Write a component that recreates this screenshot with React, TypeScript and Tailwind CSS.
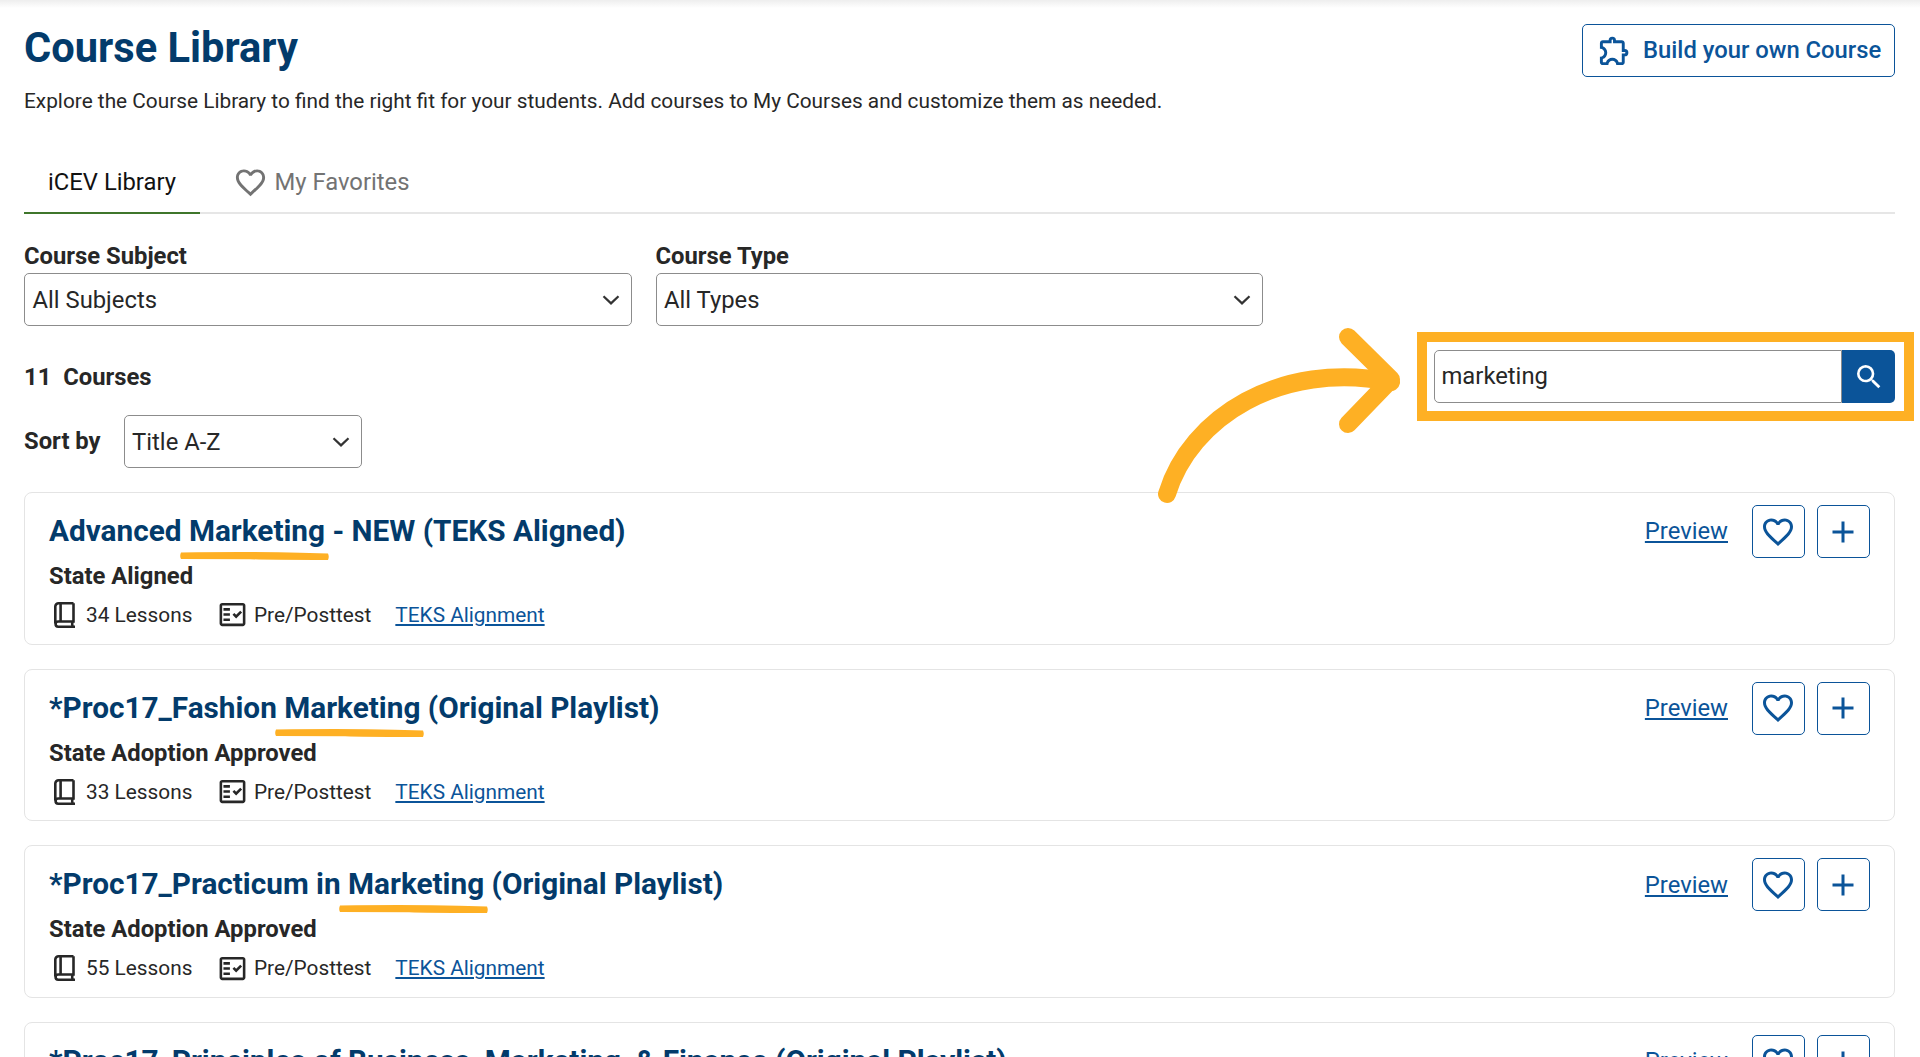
import { MdAdd, MdFavoriteBorder, MdOutlineExtension, MdOutlineFactCheck, MdSearch } from "react-icons/md";

interface Course {
  before: string;
  match: string;
  after: string;
  status: string;
  lessons: number;
  marked?: boolean;
}

const courses: Course[] = [
  { before: "Advanced ", match: "Marketing", after: " - NEW (TEKS Aligned)", status: "State Aligned", lessons: 34, marked: true },
  { before: "*Proc17_Fashion ", match: "Marketing", after: " (Original Playlist)", status: "State Adoption Approved", lessons: 33, marked: true },
  { before: "*Proc17_Practicum in ", match: "Marketing", after: " (Original Playlist)", status: "State Adoption Approved", lessons: 55, marked: true },
  { before: "*Proc17_Principles of Business, ", match: "Marketing", after: ", & Finance (Original Playlist)", status: "State Adoption Approved", lessons: 47 },
];

function Chevron() {
  return (
    <svg className="h-[10px] w-[18px]" viewBox="0 0 18 10" fill="none" stroke="#333" strokeWidth="2.2">
      <path d="M1.5 1.2 9 8.4l7.500-7.200" />
    </svg>
  );
}

function SelectBox({ value, className }: { value: string; className: string }) {
  return (
    <button
      className={`flex h-[53px] items-center justify-between rounded-[5px] border-[1.500px] border-[#8c8c8c] pr-[11px] pl-[7.500px] text-[23.800px] text-[#272727] ${className}`}
    >
      <span className="pt-[2px]">{value}</span>
      <Chevron />
    </button>
  );
}

function BookIcon() {
  return (
    <svg className="h-[26px] w-[21px]" viewBox="0 0 21 26" fill="none" stroke="#272727" strokeWidth="2.600">
      <path d="M19.500 1.300H4.600A3.300 3.300 0 0 0 1.300 4.600v17M19.500 1.300v18.200H4.200a2.600 2.600 0 0 0 0 5.200H21M6.600 1.300v18.200M18.700 19.500q-1.200 2.600 0 5.200" />
    </svg>
  );
}

function Marker() {
  return (
    <svg className="absolute top-[41px] -left-[9px] h-2 w-[149px]" viewBox="0 0 149 8" fill="#feb024">
      <path d="M1 0.500Q75-.5 120 .8L148 1.500Q149.500 5 148 7.900Q90 8 70 7.200L1 7Q-.6 4 1 .5Z" />
    </svg>
  );
}

function CourseCard({ course }: { course: Course }) {
  return (
    <article className="flex h-[152.600px] shrink-0 items-start justify-between rounded-lg border-[1.500px] border-[#e4e4e4] pt-[12px] pr-[24.500px] pl-6">
      <div>
        <h2 className="mt-[6.300px] h-[40px] text-[29.750px] leading-[40px] font-bold whitespace-pre text-[#033b6b]">
          {course.before}
          <span className="relative inline-block">
            {course.match}
            {course.marked && <Marker />}
          </span>
          {course.after}
        </h2>
        <p className="mt-[9.700px] text-[23.800px] leading-[30px] font-bold">{course.status}</p>
        <div className="mt-[9px] flex h-[30px] items-center text-[20.820px] leading-[30px]">
          <span className="mr-[11px] ml-[5px]">
            <BookIcon />
          </span>
          <span>{course.lessons} Lessons</span>
          <MdOutlineFactCheck className="mr-[6px] ml-[24.500px] size-[31px]" />
          <span>Pre/Posttest</span>
          <a className="ml-6 text-[#0b5499] underline">TEKS Alignment</a>
        </div>
      </div>

      <div className="mt-[0.300px] flex items-center text-[#0b5499]">
        <a className="mr-[23.500px] pt-px text-[23.800px] underline">Preview</a>
        <button className="mr-3 flex size-[53px] items-center justify-center rounded-[5px] border-[1.500px] border-[#0b5499]">
          <MdFavoriteBorder className="size-[36px]" />
        </button>
        <button className="flex size-[53px] items-center justify-center rounded-[5px] border-[1.500px] border-[#0b5499]">
          <MdAdd className="size-[36px]" />
        </button>
      </div>
    </article>
  );
}

function SearchBar() {
  return (
    <div className="relative mt-[24px] flex h-[53px] w-[461px]">
      <div className="flex flex-1 items-center rounded-l-[5px] border-[1.500px] border-[#8c8c8c] pt-px pl-[6.500px] text-[23.800px]">
        marketing
      </div>
      <button className="flex w-[53px] items-center justify-center rounded-r-[5px] bg-[#0b5499] text-white">
        <MdSearch className="size-[32px]" />
      </button>
      <div className="pointer-events-none absolute -top-[18px] -left-[17px] h-[89px] w-[497px] border-10 border-[#feb024]" />
      <svg
        className="pointer-events-none absolute -top-[30px] -left-[284px] h-[190px] w-[260px]"
        viewBox="1150 320 260 190"
        fill="none"
        stroke="#feb024"
        strokeWidth="18"
        strokeLinecap="round"
        strokeLinejoin="round"
      >
        <path d="M1167 494C1190 418 1280 360 1391 382" />
        <path d="M1348 337 1391 379.500 1348 424" />
      </svg>
    </div>
  );
}

export default function App() {
  return (
    <div className="flex h-[1057px] flex-col overflow-hidden bg-white pr-[25px] pl-6 font-[Roboto,sans-serif] text-[#272727]">
      <div className="-mr-[25px] -ml-6 h-2 shrink-0 bg-gradient-to-b from-[#eeeeee] to-white" />

      <header className="flex h-[135px] shrink-0 items-start justify-between">
        <div>
          <h1 className="mt-[14.300px] text-[41.640px] leading-[52px] font-bold text-[#033b6b]">Course Library</h1>
          <p className="mt-[11.700px] text-[20.820px] leading-[30px]">
            Explore the Course Library to find the right fit for your students. Add courses to My Courses and customize them as needed.
          </p>
        </div>
        <button className="mt-4 flex h-[53px] w-[313px] items-center rounded-[5px] border-[1.500px] border-[#0b5499] pl-[14px] text-[23.800px] font-medium whitespace-nowrap text-[#0b5499]">
          <MdOutlineExtension className="mr-[11px] size-[35px]" />
          <span className="pt-px">Build your own Course</span>
        </button>
      </header>

      <nav className="flex h-[71px] shrink-0 border-b-2 border-[#e6e6e6] text-[23.800px]">
        <div className="-mb-[2px] flex w-[176px] items-center justify-center border-b-2 border-[#3f762b] pt-[10px] text-[#111]">iCEV Library</div>
        <div className="flex items-center pt-[9px] pl-[33px] text-[#737373]">
          <MdFavoriteBorder className="mr-[6.500px] size-[35px]" />
          <span className="pt-[2px]">My Favorites</span>
        </div>
      </nav>

      <section className="mt-[26px] flex shrink-0 gap-6">
        <div>
          <p className="h-[33px] text-[23.800px] leading-[32px] font-bold">Course Subject</p>
          <SelectBox value="All Subjects" className="w-[607.500px]" />
        </div>
        <div>
          <p className="h-[33px] text-[23.800px] leading-[32px] font-bold">Course Type</p>
          <SelectBox value="All Types" className="w-[607px]" />
        </div>
      </section>

      <section className="flex h-[166px] shrink-0 justify-between">
        <div className="pt-[35px] text-[23.800px] font-bold">
          <p className="leading-[32px] whitespace-pre">11  Courses</p>
          <div className="mt-[22px] flex items-center gap-6">
            <span className="-mr-px pt-px">Sort by</span>
            <SelectBox value="Title A-Z" className="w-[238px] font-normal" />
          </div>
        </div>
        <SearchBar />
      </section>

      <main className="flex flex-col gap-6">
        {courses.map((course) => (
          <CourseCard key={course.before} course={course} />
        ))}
      </main>
    </div>
  );
}
